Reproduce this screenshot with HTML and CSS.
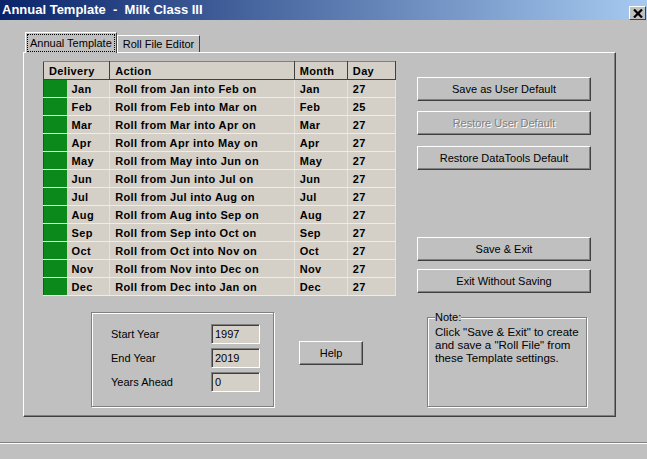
FILE: index.html
```html
<!DOCTYPE html>
<html lang="en">
<head>
    <meta charset="UTF-8">
    <title>Annual Template - Milk Class III</title>
    <link rel="stylesheet" href="styles.css">
</head>
<body>
    <div class="window">
        <div class="titlebar">
            <span class="title">Annual Template  -  Milk Class III</span>
            <span class="close">
                <svg width="10" height="9" viewBox="0 0 10 9"><path d="M1 0.5 L9 8.5 M9 0.5 L1 8.5" stroke="#000" stroke-width="2.2"/></svg>
            </span>
        </div>
        <div class="client">
            <div class="tabs">
                <div class="tab active"><span class="focus">Annual Template</span></div>
                <div class="tab">Roll File Editor</div>
            </div>
            <div class="panel">
                <div class="left">
                    <table class="grid">
                        <colgroup>
                            <col class="c-swatch"><col class="c-mon"><col class="c-action"><col class="c-month"><col class="c-day">
                        </colgroup>
                        <tr><th colspan="2">Delivery</th><th>Action</th><th>Month</th><th>Day</th></tr>
                        <tr><td class="swatch"></td><td>Jan</td><td>Roll from Jan into Feb on</td><td>Jan</td><td>27</td></tr>
                        <tr><td class="swatch"></td><td>Feb</td><td>Roll from Feb into Mar on</td><td>Feb</td><td>25</td></tr>
                        <tr><td class="swatch"></td><td>Mar</td><td>Roll from Mar into Apr on</td><td>Mar</td><td>27</td></tr>
                        <tr><td class="swatch"></td><td>Apr</td><td>Roll from Apr into May on</td><td>Apr</td><td>27</td></tr>
                        <tr><td class="swatch"></td><td>May</td><td>Roll from May into Jun on</td><td>May</td><td>27</td></tr>
                        <tr><td class="swatch"></td><td>Jun</td><td>Roll from Jun into Jul on</td><td>Jun</td><td>27</td></tr>
                        <tr><td class="swatch"></td><td>Jul</td><td>Roll from Jul into Aug on</td><td>Jul</td><td>27</td></tr>
                        <tr><td class="swatch"></td><td>Aug</td><td>Roll from Aug into Sep on</td><td>Aug</td><td>27</td></tr>
                        <tr><td class="swatch"></td><td>Sep</td><td>Roll from Sep into Oct on</td><td>Sep</td><td>27</td></tr>
                        <tr><td class="swatch"></td><td>Oct</td><td>Roll from Oct into Nov on</td><td>Oct</td><td>27</td></tr>
                        <tr><td class="swatch"></td><td>Nov</td><td>Roll from Nov into Dec on</td><td>Nov</td><td>27</td></tr>
                        <tr><td class="swatch"></td><td>Dec</td><td>Roll from Dec into Jan on</td><td>Dec</td><td>27</td></tr>
                    </table>
                    <div class="lower">
                        <div class="years">
                            <div class="field"><span class="label">Start Year</span><span class="input">1997</span></div>
                            <div class="field"><span class="label">End Year</span><span class="input">2019</span></div>
                            <div class="field"><span class="label">Years Ahead</span><span class="input">0</span></div>
                        </div>
                        <button class="btn help">Help</button>
                    </div>
                </div>
                <div class="right">
                    <button class="btn wide">Save as User Default</button>
                    <button class="btn wide b2" disabled>Restore User Default</button>
                    <button class="btn wide b3">Restore DataTools Default</button>
                    <button class="btn wide b4">Save &amp; Exit</button>
                    <button class="btn wide b5">Exit Without Saving</button>
                    <fieldset class="note">
                        <legend>Note:</legend>
                        <p>Click "Save &amp; Exit" to create<br>and save a "Roll File" from<br>these Template settings.</p>
                    </fieldset>
                </div>
            </div>
        </div>
        <div class="separator"></div>
    </div>
</body>
</html>
```

FILE: styles.css
```css
body {
    margin: 0;
    background: #c0c0c0;
    font: 11px "Liberation Sans", Arial, sans-serif;
    color: #000;
}
.window {
    width: 647px;
    height: 459px;
    overflow: hidden;
}

/* title bar */
.titlebar {
    height: 20px;
    background: linear-gradient(to right, #0a246a, #a6caf0);
    display: flex;
    justify-content: space-between;
    padding: 0 1px 0 2px;
}
.title {
    color: #fff;
    font-weight: bold;
    font-size: 13px;
    line-height: 20px;
    white-space: pre;
}
.close {
    align-self: flex-end;
    width: 17px;
    height: 14px;
    box-sizing: border-box;
    background: #c0c0c0;
    border: 1px solid;
    border-color: #fff #404040 #404040 #fff;
    display: flex;
    align-items: center;
    justify-content: center;
}

/* tabs */
.client {
    padding: 12px 0 0 23px;
}
.tabs {
    display: flex;
    align-items: flex-end;
    height: 20px;
    padding-left: 2px;
    position: relative;
    z-index: 1;
}
.tab {
    height: 17px;
    box-sizing: border-box;
    padding: 0 5px;
    line-height: 16px;
    border: 1px solid;
    border-bottom: none;
    border-color: #fff #404040 transparent #fff;
}
.tab.active {
    height: 21px;
    margin-bottom: -1px;
    padding: 1px 1px 0 1px;
    background: #c0c0c0;
    line-height: 16px;
}
.focus {
    display: inline-block;
    border: 1px dotted #000;
    padding: 0 2px;
}
.panel {
    width: 593px;
    height: 365px;
    box-sizing: border-box;
    border: 1px solid;
    border-color: #fff #404040 #404040 #fff;
    box-shadow: inset -1px -1px 0 #808080;
    display: flex;
    padding: 8px 0 0 19px;
}

/* grid */
.grid {
    border-collapse: collapse;
    table-layout: fixed;
    width: 353px;
    background: #d4d0c8;
    font-weight: bold;
    letter-spacing: 0.35px;
    border-left: 1px solid #404040;
    border-top: 1px solid #808080;
    border-right: 1px solid #808080;
}
.c-swatch { width: 23px; }
.c-mon { width: 43px; }
.c-action { width: 184px; }
.c-month { width: 53px; }
.c-day { width: 48px; }
.grid tr {
    height: 18px;
}
.grid th {
    text-align: left;
    padding: 0 0 0 5px;
    border-right: 1px solid #404040;
    border-bottom: 1px solid #404040;
}
.grid td {
    padding: 0 0 0 5px;
    border-right: 1px solid #e6e3dc;
    border-bottom: 1px solid #eeece6;
}
.grid td.swatch {
    background: #0b8a1b;
    padding: 0;
    border-right: none;
}

/* lower left */
.left {
    display: flex;
    flex-direction: column;
}
.lower {
    display: flex;
    margin: 16px 0 0 48px;
}
.years {
    width: 183px;
    height: 95px;
    box-sizing: border-box;
    border: 1px solid #808080;
    box-shadow: 1px 1px 0 #fff, inset 1px 1px 0 #fff;
    padding: 11px 0 0 19px;
    display: flex;
    flex-direction: column;
    gap: 4px;
}
.field {
    display: flex;
    align-items: center;
    height: 20px;
}
.label {
    width: 100px;
}
.input {
    width: 49px;
    height: 20px;
    box-sizing: border-box;
    background: #d4d0c8;
    border: 1px solid;
    border-color: #808080 #fff #fff #808080;
    box-shadow: inset 1px 1px 0 #404040;
    padding-left: 3px;
    line-height: 18px;
}

/* buttons */
.btn {
    font: inherit;
    color: #000;
    background: #c0c0c0;
    height: 24px;
    padding: 0;
    border: 1px solid;
    border-color: #fff #404040 #404040 #fff;
    box-shadow: inset -1px -1px 0 #808080;
}
.btn:disabled {
    color: #808080;
    text-shadow: 1px 1px 0 #fff;
}
.help {
    width: 64px;
    margin: 29px 0 0 25px;
}
.right {
    display: flex;
    flex-direction: column;
    align-items: flex-start;
    margin-left: 21px;
    padding-top: 16px;
}
.wide {
    width: 174px;
}
.b2 { margin-top: 10px; }
.b3 { margin-top: 11px; }
.b4 { margin-top: 67px; }
.b5 { margin-top: 8px; }

.note {
    width: 160px;
    height: 96px;
    box-sizing: border-box;
    margin: 18px 0 0 10px;
    padding: 0 0 0 7px;
    border: 1px solid #808080;
    box-shadow: 1px 1px 0 #fff, inset 1px 1px 0 #fff;
}
.note legend {
    padding: 0;
    background: #c0c0c0;
    line-height: 13px;
}
.note p {
    margin: 2px 0 0 0;
    font-size: 11.5px;
    line-height: 13px;
}

.separator {
    margin-top: 25px;
    border-top: 1px solid #808080;
    border-bottom: 1px solid #fff;
}
```
